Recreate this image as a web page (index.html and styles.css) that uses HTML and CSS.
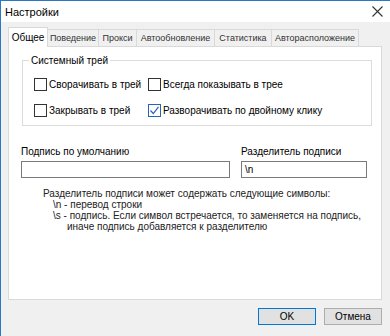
FILE: index.html
```html
<!DOCTYPE html>
<html>
	<head>
		<title>Настройки</title>
		<link rel="stylesheet" href="styles.css">
	</head>
	<body>
		<div class="window">
			<div class="titlebar">
				<span class="title">Настройки</span>
				<span class="close">
					<svg width="11" height="11" viewBox="0 0 11 11"><path d="M0.5 0.5 L10.5 10.5 M10.5 0.5 L0.5 10.5" stroke="#333" stroke-width="1.1" fill="none"/></svg>
				</span>
			</div>
			<div class="content">
				<div class="tabs">
					<div class="tab active">Общее</div>
					<div class="tab w51">Поведение</div>
					<div class="tab w38">Прокси</div>
					<div class="tab w78">Автообновление</div>
					<div class="tab w57">Статистика</div>
					<div class="tab w87">Авторасположение</div>
				</div>
				<div class="panel">
					<fieldset class="group">
						<legend>Системный трей</legend>
						<div class="checks">
							<label class="check"><span class="box"></span>Сворачивать в трей</label>
							<label class="check"><span class="box"></span>Всегда показывать в трее</label>
							<label class="check"><span class="box"></span>Закрывать в трей</label>
							<label class="check"><span class="box checked"><svg width="11" height="11" viewBox="0 0 11 11"><path d="M1.5 5.5 L4.3 8.5 L9.5 1.8" stroke="#2a62b8" stroke-width="1.2" fill="none"/></svg></span>Разворачивать по двойному клику</label>
						</div>
					</fieldset>
					<div class="fields">
						<div class="field wide">
							<div class="label">Подпись по умолчанию</div>
							<div class="input"></div>
						</div>
						<div class="field narrow">
							<div class="label">Разделитель подписи</div>
							<div class="input">\n</div>
						</div>
					</div>
					<div class="help">
						<div>Разделитель подписи может содержать следующие символы:</div>
						<div class="indent">\n - перевод строки</div>
						<div class="indent">\s - подпись. Если символ встречается, то заменяется на подпись,</div>
						<div class="indent2">иначе подпись добавляется к разделителю</div>
					</div>
				</div>
				<div class="buttons">
					<div class="button default">OK</div>
					<div class="button">Отмена</div>
				</div>
			</div>
		</div>
	</body>
</html>
```

FILE: styles.css
```css
* {
	box-sizing: border-box;
}
html,body {
	width: 100%;
	height: 100%;
}
body {
	margin: 0;
	font-family: "Liberation Sans", Arial, sans-serif;
	font-size: 10px;
	color: #000;
	background-color: #f0f0f0;
	overflow: hidden;
}
.window {
	height: 336px;
	border-left: 1px solid #2b79c4;
	border-top: 1px solid #2b79c4;
	display: flex;
	flex-direction: column;
}
.titlebar {
	height: 21px;
	background-color: #fff;
	display: flex;
	align-items: center;
	justify-content: space-between;
	padding: 0 7px 0 4px;
}
.title {
	font-size: 11px;
}
.close {
	display: flex;
}
.content {
	flex: 1;
	padding: 5px 8px 0 7px;
	display: flex;
	flex-direction: column;
}
.tabs {
	display: flex;
	align-items: flex-end;
	height: 19px;
	padding-left: 2px;
	position: relative;
	z-index: 1;
}
.tab {
	height: 17px;
	padding-top: 3px;
	border: 1px solid #d9d9d9;
	border-bottom: none;
	margin-left: -1px;
	color: #333;
	font-size: 9px;
	white-space: nowrap;
	overflow: hidden;
	text-align: center;
}
.tab.active {
	width: 40px;
	height: 20px;
	margin: 0 0 -1px -2px;
	padding-top: 4px;
	background-color: #fff;
	color: #000;
	font-size: 10px;
}
.w51 { width: 52px; }
.w38 { width: 39px; }
.w78 { width: 79px; }
.w57 { width: 58px; }
.w87 { width: 88px; }
.panel {
	height: 254px;
	background-color: #fff;
	border: 1px solid #d9d9d9;
	padding: 8px 9px 0 13px;
}
.group {
	margin: 0;
	height: 71px;
	border: 1px solid #dcdcdc;
	padding: 11px 0 0 11px;
}
.group legend {
	padding: 0 2px;
	margin-left: -5px;
	color: #000;
}
.checks {
	display: grid;
	grid-template-columns: 114px 1fr;
	row-gap: 12px;
}
.check {
	display: flex;
	align-items: center;
	gap: 2px;
	height: 14px;
	white-space: nowrap;
}
.box {
	width: 13px;
	height: 13px;
	border: 1px solid #333;
	background-color: #fff;
	display: flex;
	align-items: center;
	justify-content: center;
}
.box.checked {
	border-color: #2a62b8;
}
.fields {
	display: flex;
	gap: 11px;
	margin-top: 20px;
	margin-left: -1px;
}
.field .label {
	height: 15px;
}
.field.wide {
	width: 209px;
}
.field.narrow {
	width: 126px;
}
.input {
	height: 17px;
	border: 1px solid #7a7a7a;
	background-color: #fff;
	padding: 2px 3px;
}
.help {
	margin-top: 10px;
	padding-left: 21px;
	line-height: 11px;
	color: #222;
}
.indent {
	padding-left: 10px;
}
.indent2 {
	padding-left: 24px;
}
.buttons {
	display: flex;
	justify-content: flex-end;
	gap: 8px;
	margin-top: 8px;
}
.button {
	width: 58px;
	height: 17px;
	border: 1px solid #adadad;
	background-color: #e1e1e1;
	display: flex;
	align-items: center;
	justify-content: center;
}
.button.default {
	border-color: #0078d7;
}
```
